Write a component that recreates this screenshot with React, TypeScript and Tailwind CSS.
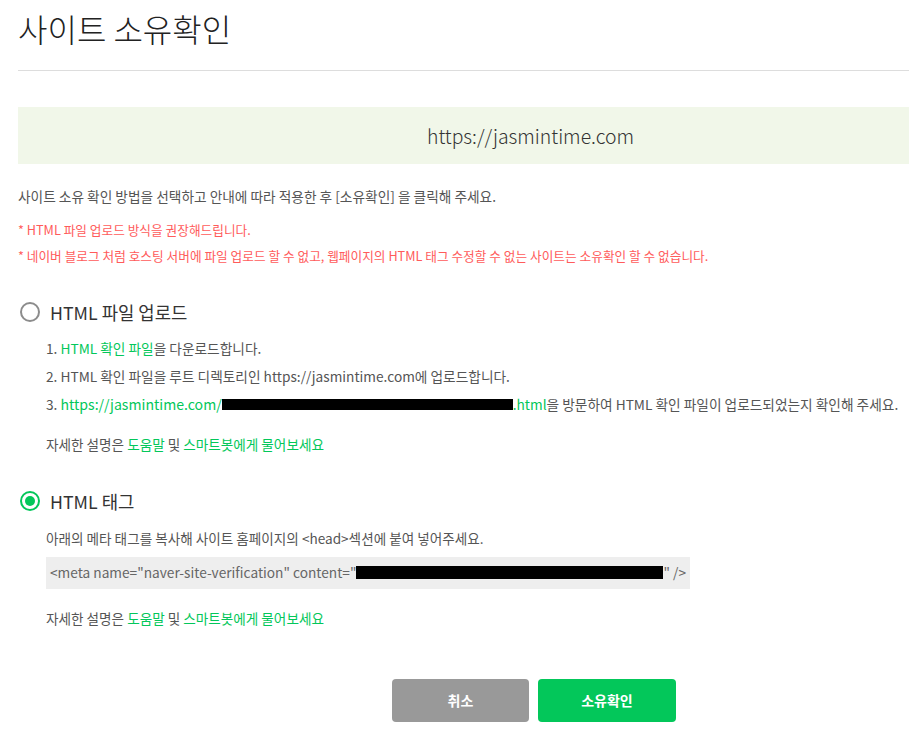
import React from 'react';

const font = { fontFamily: '"Noto Sans CJK KR", "Noto Sans", sans-serif' };

const Radio = ({ checked }: { checked?: boolean }) =>
  checked ? (
    <span className="flex h-[20px] w-[20px] items-center justify-center rounded-full border-2 border-[#03c75a]">
      <span className="h-[10px] w-[10px] rounded-full bg-[#03c75a]" />
    </span>
  ) : (
    <span className="h-[20px] w-[20px] rounded-full border-2 border-[#8c8c8c]" />
  );

const HelpLine = () => (
  <p className="text-[13.6px] text-[#555]">
    자세한 설명은 <span className="text-[#03c75a]">도움말</span> 및{' '}
    <span className="text-[#03c75a]">스마트봇에게 물어보세요</span>
  </p>
);

export default function App() {
  return (
    <div className="min-h-[743px] overflow-hidden bg-white pl-[18px]" style={font}>
      <h1 className="pt-[6px] text-[32px] font-light leading-[44px] text-[#222]">사이트 소유확인</h1>
      <div className="mt-[20px] h-px bg-[#dddddd]" />

      {/* site url */}
      <div className="mt-[36px] flex h-[57px] items-center bg-[#f1f7e9] pl-[409px]">
        <span className="text-[19.4px] font-light text-[#333]">https://jasmintime.com</span>
      </div>

      <p className="mt-[22px] text-[13.7px] text-[#555]">
        사이트 소유 확인 방법을 선택하고 안내에 따라 적용한 후 [소유확인] 을 클릭해 주세요.
      </p>
      <div className="mt-[14px] flex flex-col gap-[8px] text-[12.7px] leading-[18px] text-[#ff5b5b]">
        <p>* HTML 파일 업로드 방식을 권장해드립니다.</p>
        <p>* 네이버 블로그 처럼 호스팅 서버에 파일 업로드 할 수 없고, 웹페이지의 HTML 태그 수정할 수 없는 사이트는 소유확인 할 수 없습니다.</p>
      </div>

      {/* html file upload */}
      <div className="mt-[34px] flex items-center gap-[10px] pl-[2px]">
        <Radio />
        <span className="text-[17.8px] text-[#333]">HTML 파일 업로드</span>
      </div>
      <div className="mt-[9px] pl-[28px]">
        <div className="flex flex-col text-[13.7px] leading-[28px] text-[#555]">
          <p>
            1. <span className="text-[#03c75a]">HTML 확인 파일</span>을 다운로드합니다.
          </p>
          <p>2. HTML 확인 파일을 루트 디렉토리인 https://jasmintime.com에 업로드합니다.</p>
          <p className="flex items-center whitespace-nowrap">
            3.&nbsp;<span className="text-[14.1px] text-[#03c75a]">https://jasmintime.com/</span>
            <span className="inline-block h-[11px] w-[291px] bg-black" />
            <span className="text-[#03c75a]">.html</span>을 방문하여 HTML 확인 파일이 업로드되었는지 확인해 주세요.
          </p>
        </div>
        <div className="mt-[16px]">
          <HelpLine />
        </div>
      </div>

      {/* html tag */}
      <div className="mt-[33px] flex items-center gap-[10px] pl-[2px]">
        <Radio checked />
        <span className="text-[17.8px] text-[#333]">HTML 태그</span>
      </div>
      <div className="mt-[14px] pl-[28px]">
        <p className="text-[13.6px] text-[#555]">아래의 메타 태그를 복사해 사이트 홈페이지의 &lt;head&gt;섹션에 붙여 넣어주세요.</p>
        <div className="mt-[8px] flex h-[32px] w-[644px] items-center whitespace-nowrap bg-[#eeeeee] px-[4px] text-[13.7px] text-[#666]">
          &lt;meta name="naver-site-verification" content="
          <span className="inline-block h-[13px] w-[312px] bg-black" />
          " /&gt;
        </div>
        <div className="mt-[19px]">
          <HelpLine />
        </div>
      </div>

      {/* buttons */}
      <div className="mt-[51px] flex gap-[9px] pl-[374px]">
        <button className="h-[43px] w-[137px] rounded-[4px] bg-[#999999] text-[14px] font-bold text-white">취소</button>
        <button className="h-[43px] w-[138px] rounded-[4px] bg-[#03c75a] text-[14px] font-bold text-white">소유확인</button>
      </div>
    </div>
  );
}
